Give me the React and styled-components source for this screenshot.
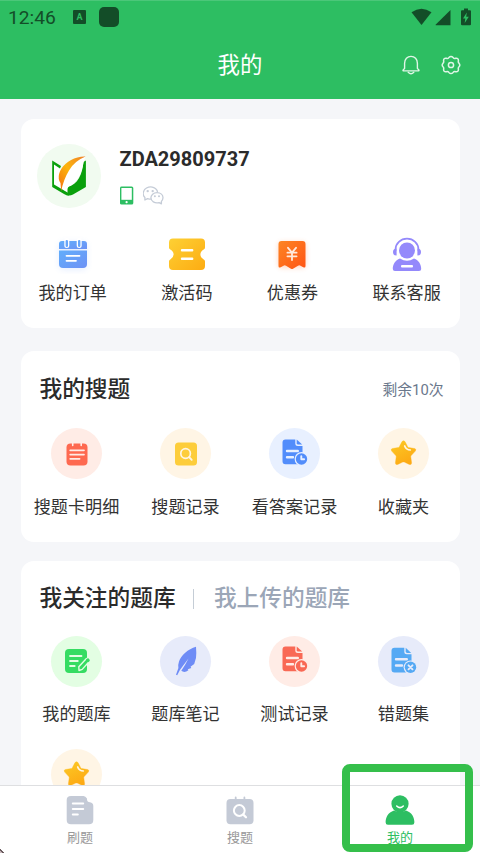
import React from "react";
import styled, { createGlobalStyle } from "styled-components";

const GlobalStyle = createGlobalStyle`
  * {
    box-sizing: border-box;
  }
  body {
    margin: 0;
    background-color: #f5f6f9;
    font-family: Roboto, "Noto Sans CJK SC", sans-serif;
    color: #333;
  }
  svg {
    display: block;
    flex-shrink: 0;
  }
`;

const Screen = styled.div`
  position: relative;
  display: flex;
  flex-direction: column;
  width: 480px;
  height: 853px;
  overflow: hidden;
`;

const Header = styled.header`
  height: 98.5px;
  flex-shrink: 0;
  background-color: #2dbe62;
  border-top: 1px solid #4bc779;
`;

const StatusBar = styled.div`
  display: flex;
  align-items: center;
  height: 31px;
  padding: 0 7px 0 8px;
  color: #134d28;
`;

const Clock = styled.span`
  width: 65px;
  padding-top: 1px;
  font-size: 19.2px;
  line-height: 31px;
`;

const KeyboardBadge = styled.span`
  width: 13px;
  height: 14px;
  margin-right: 13px;
  border-radius: 1px;
  background-color: #134d28;
  color: #2dbe62;
  font-size: 9px;
  font-weight: 700;
  line-height: 14px;
  text-align: center;
`;

const AppBadge = styled.span`
  width: 20px;
  height: 20px;
  border-radius: 5px;
  background-color: #134d28;
`;

const StatusIcons = styled.div`
  margin-left: auto;
`;

const TitleBar = styled.div`
  display: grid;
  grid-template-columns: 1fr auto 1fr;
  align-items: center;
  height: 66px;
  padding: 0 19px;
`;

const PageTitle = styled.h1`
  grid-column: 2;
  margin: 0;
  color: #fff;
  font-size: 22.4px;
  font-weight: 400;
  line-height: 32px;
`;

const Actions = styled.div`
  display: flex;
  justify-content: flex-end;
  gap: 20px;
`;

const Content = styled.main`
  flex: 1;
  display: flex;
  flex-direction: column;
  min-height: 0;
  overflow: hidden;
  padding: 20.5px 20.5px 0 20.5px;
`;

const Card = styled.section`
  flex-shrink: 0;
  height: ${(props) => props.$height}px;
  margin-bottom: ${(props) => props.$gap || 0}px;
  border-radius: 13px;
  background-color: #fff;
`;

const Profile = styled.div`
  display: flex;
  align-items: center;
  height: 113px;
  margin-bottom: 2px;
  padding-left: 16px;
`;

const ProfileInfo = styled.div`
  display: flex;
  flex-direction: column;
  gap: 15px;
  margin-left: 19px;
  padding-top: 1.5px;
`;

const UserName = styled.div`
  font-size: 20px;
  font-weight: 700;
  line-height: 24px;
  color: #2b2b2b;
`;

const Bindings = styled.div`
  display: flex;
  align-items: center;
  gap: 9px;
`;

const Services = styled.div`
  display: flex;
  justify-content: space-between;
  padding: 0 18.7px 0 18px;
`;

const Item = styled.div`
  display: flex;
  flex-direction: column;
  align-items: center;
`;

const Label = styled.span`
  font-size: 17.1px;
  line-height: 24px;
  white-space: nowrap;
`;

const ServiceLabel = styled(Label)`
  margin-top: 7px;
`;

const CardHead = styled.div`
  display: flex;
  align-items: center;
  height: ${(props) => props.$height}px;
  padding: 2px 16px 0 19px;
`;

const CardTitle = styled.h2`
  margin: 0;
  font-size: 22.7px;
  font-weight: 500;
  line-height: 32px;
  color: ${(props) => (props.$muted ? "#9ba6b7" : "#2b2b2b")};
`;

const Remaining = styled.span`
  margin-left: auto;
  font-size: 14.8px;
  line-height: 20px;
  color: #6b788c;
`;

const Divider = styled.span`
  width: 1px;
  height: 20px;
  margin: 0 20px 0 17.3px;
  background-color: #c5cdd6;
`;

const Grid = styled.div`
  display: grid;
  grid-template-columns: repeat(4, 109px);
  row-gap: 23px;
  padding-left: 1.5px;
`;

const Round = styled.div`
  display: flex;
  align-items: center;
  justify-content: center;
  width: 51px;
  height: 51px;
  border-radius: 50%;
  background-color: ${(props) => props.$bg};
`;

const GridLabel = styled(Label)`
  margin-top: 15.5px;
`;

const TabBar = styled.nav`
  display: grid;
  grid-template-columns: repeat(3, 1fr);
  flex-shrink: 0;
  height: 68px;
  border-top: 1.5px solid #dedfe1;
  background-color: #fff;
`;

const Tab = styled.div`
  display: flex;
  flex-direction: column;
  align-items: center;
  padding-top: 8.5px;
  font-size: 13px;
  line-height: 20px;
  color: ${(props) => (props.$active ? "#2dbe62" : "#999")};
  svg {
    margin-bottom: 3.5px;
  }
`;

const Highlight = styled.div`
  position: absolute;
  left: 342px;
  top: 764px;
  width: 131px;
  height: 88px;
  border: 8.5px solid #35bf4b;
  border-radius: 8px;
  pointer-events: none;
`;

const CornerMark = styled.div`
  position: absolute;
  left: 0;
  bottom: 0;
  width: 4px;
  height: 4px;
  background: linear-gradient(45deg, #c9b8bc 35%, #6a5a5e 36%, #6a5a5e 50%, transparent 51%);
`;

const SignalIcons = () => (
  <svg width="62" height="20" viewBox="0 0 62 20" fill="#134d28">
    <path d="M0.5 5.2Q10.5 -1.8 20.5 5.2L10.5 18Z" />
    <path d="M39.5 3V18.2H25Q24 18.2 24.8 17.4Z" />
    <path d="M51 3.2H53V1.5H57V3.2H59Q60 3.2 60 4.2V17.2Q60 18.2 59 18.2H51.2Q50 18.2 50 17.2V4.2Q50 3.2 51 3.2Z" />
    <path d="M55.8 5.5L52 11.5H54.3L53.7 16L57.8 9.8H55.2Z" fill="#2dbe62" />
  </svg>
);

const BellIcon = () => (
  <svg width="20" height="20" viewBox="0 0 20 20" fill="none" stroke="#dff6e7" strokeWidth="1.4" strokeLinejoin="round" strokeLinecap="round">
    <path d="M3.6 13.4V8.2C3.6 4.2 6.3 1.4 10 1.4S16.4 4.2 16.4 8.2V13.4L18 15.2Q18 15.9 17.4 15.9H2.6Q2 15.9 2 15.2Z" />
    <path d="M7.2 17.2Q10 20.2 12.8 17.2" />
  </svg>
);

const GearIcon = () => (
  <svg width="20" height="20" viewBox="0 0 20 20" fill="none" stroke="#dff6e7" strokeWidth="1.5" strokeLinejoin="round">
    <path d="M7.9 2.6Q10 .2 12.1 2.6Q13.1 3.9 14.7 3.3Q17.6 2.9 17.4 5.8Q17 7.3 18 8.2Q19.6 10 18 11.8Q17 12.7 17.4 14.2Q17.6 17.1 14.7 16.7Q13.1 16.1 12.1 17.4Q10 19.8 7.9 17.4Q6.9 16.1 5.3 16.7Q2.4 17.1 2.6 14.2Q3 12.7 2 11.8Q.4 10 2 8.2Q3 7.3 2.6 5.8Q2.4 2.9 5.3 3.3Q6.9 3.9 7.9 2.6Z" />
    <circle cx="10" cy="10" r="2.6" />
  </svg>
);

const Avatar = () => (
  <svg width="64" height="64" viewBox="0 0 64 64">
    <defs>
      <linearGradient id="feather" x1="0" y1="1" x2="1" y2="0">
        <stop offset="0" stopColor="#f36c10" />
        <stop offset="0.5" stopColor="#fcb40c" />
        <stop offset="1" stopColor="#f0802a" />
      </linearGradient>
    </defs>
    <circle cx="32" cy="32" r="32" fill="#f1fbf0" />
    <path d="M17 20.6L23 24.4L44 19L31.8 49.2L17 40.6Z" fill="#fff" />
    <path d="M15.2 16.5L24 22L23 24.4L17 20.6V40.6L31.8 49.2V51.8Q30 52 27 50L15.2 43Z" fill="#0aa00c" />
    <path d="M48.9 16.5V43L36 50.5Q32.5 52 30.5 51V43C41 40.5 45.5 30 46.4 18Z" fill="#0aa00c" />
    <path d="M48.6 12.6C45.5 17 46.5 36 31.8 42.5L28.5 47Q26 46 27.5 37C30.5 26 38 17 48.6 12.6Z" fill="#fff" />
    <path d="M48.6 12.6C38 12.3 29.5 17.5 24.5 24.5Q21.2 29.5 21.8 35Q22.2 37.5 23.5 39L24.2 47.2Q26.5 35.5 32 26.5Q37.5 17 48.6 12.6Z" fill="url(#feather)" />
  </svg>
);

const PhoneIcon = () => (
  <svg width="14" height="19" viewBox="0.3 0 14 19">
    <rect x="0.2" y="0.5" width="13.4" height="18" rx="1.6" fill="#2dbe62" />
    <rect x="1.7" y="2" width="10.4" height="11.8" fill="#fff" />
    <circle cx="6.9" cy="16.2" r="1.1" fill="#fff" />
  </svg>
);

const WechatIcon = () => (
  <svg width="21" height="19" viewBox="0.3 0 21 19" fill="none" stroke="#c5ccd7" strokeWidth="1.3" strokeLinejoin="round">
    <path d="M8.3 12.9Q6.3 13.4 4.8 12.7L2.2 14V11.5C-1 8.4.7 3.8 3.8 2C8.8-.7 14.6 2 14.8 6.3" />
    <path d="M14.3 6.6C18 6.6 20.3 9 20.3 11.8Q20.2 13.8 18.7 15.4V17.8L16.4 16.6C12 17.7 8.2 15.2 8.2 11.8C8.2 9 10.8 6.6 14.3 6.6Z" />
    <g fill="#c5ccd7" stroke="none">
      <circle cx="5" cy="5.1" r="1.2" />
      <circle cx="10" cy="5.1" r="1.2" />
      <circle cx="12.2" cy="10.2" r="1" />
      <circle cx="16.3" cy="10.2" r="1" />
    </g>
  </svg>
);

const OrderIcon = () => (
  <svg width="38" height="40" viewBox="0 0 38 40">
    <defs>
      <linearGradient id="order" x1="0" y1="0" x2="1" y2="1">
        <stop offset="0" stopColor="#62aefb" />
        <stop offset="1" stopColor="#6d91f5" />
      </linearGradient>
      <filter id="orderGlow" x="-40%" y="-40%" width="180%" height="180%">
        <feGaussianBlur stdDeviation="3" />
      </filter>
    </defs>
    <rect x="5" y="8" width="28" height="28" rx="5" fill="#6d9bff" opacity="0.16" filter="url(#orderGlow)" />
    <path d="M5 15V10Q5 7 8 7H30Q33 7 33 10V15Z" fill="url(#order)" />
    <path d="M5 16.5H33V30Q33 34 29 34H9Q5 34 5 30Z" fill="url(#order)" />
    <path d="M12.8 6.5V11.5M25.2 6.5V11.5" stroke="#fff" strokeWidth="5" strokeLinecap="round" />
    <path d="M12.8 7.2V11.8M25.2 7.2V11.8" stroke="#66a5fa" strokeWidth="2.4" strokeLinecap="round" />
    <path d="M12.5 21.8H25.5M12.5 26.8H22" stroke="#fff" strokeWidth="1.8" strokeLinecap="round" />
  </svg>
);

const TicketIcon = () => (
  <svg width="38" height="40" viewBox="0 0 38 40">
    <defs>
      <linearGradient id="ticket" x1="0" y1="0" x2="1" y2="1">
        <stop offset="0" stopColor="#fdd034" />
        <stop offset="1" stopColor="#fdac12" />
      </linearGradient>
    </defs>
    <path d="M5 4.6H33Q37 4.6 37 8.6V13.6Q37 15 35.7 15.6Q32.4 17.6 32.4 20.5T35.7 25.4Q37 26 37 27.4V32Q37 36 33 36H5Q1 36 1 32V27.4Q1 26 2.3 25.4Q5.6 23.4 5.6 20.5T2.3 15.6Q1 15 1 13.6V8.6Q1 4.6 5 4.6Z" fill="url(#ticket)" />
    <path d="M14 16.3H24.2M14 24.7H24.2" stroke="#fff" strokeWidth="2.4" strokeLinecap="round" />
  </svg>
);

const CouponIcon = () => (
  <svg width="38" height="40" viewBox="0 0 38 40">
    <defs>
      <linearGradient id="coupon" x1="0" y1="0" x2="1" y2="1">
        <stop offset="0" stopColor="#fd8524" />
        <stop offset="1" stopColor="#ff5414" />
      </linearGradient>
      <filter id="couponGlow" x="-40%" y="-40%" width="180%" height="180%">
        <feGaussianBlur stdDeviation="2.5" />
      </filter>
    </defs>
    <rect x="5" y="8" width="28" height="26" rx="4" fill="#ff6a20" opacity="0.25" filter="url(#couponGlow)" />
    <path d="M8.5 7H29.5Q32.5 7 32.5 10V32Q32.5 34.3 30.3 33.2L27 31.5Q26 31 25 31.8L20 34.8Q19 35.3 18 34.8L13 31.8Q12 31 11 31.5L7.7 33.2Q5.5 34.3 5.5 32V10Q5.5 7 8.5 7Z" fill="url(#coupon)" />
    <path d="M15 13.8L19 18.5L23 13.8M19 18.5V26M14.4 18.7H23.6M14.4 22.3H23.6" fill="none" stroke="#ffe9dc" strokeWidth="1.8" strokeLinecap="round" />
  </svg>
);

const SupportIcon = () => (
  <svg width="38" height="40" viewBox="0 0 38 40" fill="#9489fb">
    <circle cx="19" cy="16.5" r="8" />
    <path d="M7.5 17V15.5A11.5 10.9 0 0 1 30.5 15.5V17" fill="none" stroke="#9489fb" strokeWidth="1.7" />
    <path d="M8.6 14.5V21.5Q5 21.5 5 18T8.6 14.5ZM29.4 14.5V21.5Q33 21.5 33 18T29.4 14.5Z" />
    <path d="M12 24.5Q19 29 26 24.5C31 26.5 33.2 30.5 33.2 35Q33.2 37 31 37H7Q4.8 37 4.8 35C4.8 30.5 7 26.5 12 24.5Z" />
    <rect x="13" y="31" width="12" height="2.5" rx="1" fill="#fff" />
  </svg>
);

const CardIcon = () => (
  <svg width="26" height="26" viewBox="0 0 26 26">
    <rect x="2.5" y="2.5" width="21" height="22" rx="4" fill="#fe6950" />
    <path d="M8.7 1V4.5M17.2 1V4.5" stroke="#ffece6" strokeWidth="1.6" strokeLinecap="round" />
    <path d="M6.2 9.3H20M6.2 13.6H20M6.2 17.8H15.6" stroke="#ffece6" strokeWidth="1.7" strokeLinecap="round" />
  </svg>
);

const SearchIcon = () => (
  <svg width="26" height="26" viewBox="0 0 26 26">
    <rect x="2" y="1.5" width="22" height="23" rx="3.5" fill="#fdcd3b" />
    <circle cx="12.6" cy="12.5" r="4.8" fill="none" stroke="#fff5e3" strokeWidth="1.7" />
    <path d="M16.2 16.1L18.7 18.8" stroke="#fff5e3" strokeWidth="1.9" strokeLinecap="round" />
  </svg>
);

const DocIcon = ({ color, bg, mark, shift = 0 }) => (
  <svg width="28" height="32" viewBox={`0.5 ${-shift} 28 32`}>
    <path d="M5 2.5H14.8V6.5Q14.8 9 17.3 9H22V24Q22 27.2 19 27.2H5Q2 27.2 2 24.2V5.5Q2 2.5 5 2.5Z" fill={color} />
    <path d="M16.2 2.5L21.7 7.6H17.6Q16.2 7.6 16.2 6.2Z" fill={color} />
    <path d="M6.5 14H17.3M6.5 20.2H12.5" stroke={bg} strokeWidth="2.4" strokeLinecap="round" />
    <circle cx="21" cy="22" r="6.9" fill={bg} />
    <circle cx="21" cy="22" r="5.7" fill={color} />
    <path d={mark} fill="none" stroke={bg} strokeWidth="1.9" strokeLinecap="round" strokeLinejoin="round" />
  </svg>
);

const clockMark = "M20.8 19.2V22.3H23.6";
const crossMark = "M19 20L23 24M23 20L19 24";

const StarIcon = () => (
  <svg width="28" height="28" viewBox="0.5 0.5 28 28">
    <defs>
      <linearGradient id="star" x1="0" y1="0" x2="0.5" y2="1">
        <stop offset="0" stopColor="#fcca25" />
        <stop offset="1" stopColor="#fdaa14" />
      </linearGradient>
    </defs>
    <path d="M12.5 2.1Q14 .2 15.5 2.1L18.3 7.4Q18.6 8 19.3 8.1L25.1 9Q27.2 9.7 25.8 11.6L21.7 16.1Q21.2 16.6 21.3 17.4L22.1 23.4Q21.9 25.7 19.8 24.9L14.8 22.6Q14 22.3 13.2 22.6L8.2 24.9Q6.1 25.7 5.9 23.4L6.7 17.4Q6.8 16.6 6.3 16.1L2.2 11.6Q.8 9.7 2.9 9L8.7 8.1Q9.4 8 9.7 7.4Z" fill="url(#star)" stroke="url(#star)" strokeWidth="0.4" />
    <path d="M15.2 6.5Q16.6 10.3 20.8 10.5" fill="none" stroke="#fff5e3" strokeWidth="1.7" strokeLinecap="round" />
  </svg>
);

const BankIcon = () => (
  <svg width="28" height="28" viewBox="0 0 28 28">
    <rect x="2" y="2" width="22" height="24" rx="4" fill="#35dc62" />
    <path d="M7 9H18.5M7 14H14.8M7 19H11.7" stroke="#e3fde3" strokeWidth="1.8" strokeLinecap="round" />
    <path d="M16 23.5L15.8 19.8L23.2 11.8Q24.8 10.6 26 12.2Q27 13.7 25.8 15L19.2 22.4Z" fill="#35dc62" stroke="#e3fde3" strokeWidth="1.4" strokeLinejoin="round" />
    <path d="M23 12.8L25.4 15.2L26.8 13.8Q27 12.5 25.6 11.4Q24.4 11 23 12.8Z" fill="#35dc62" />
  </svg>
);

const FeatherIcon = () => (
  <svg width="24" height="30" viewBox="0 0 24 30">
    <path d="M22 .8C14 3 7 9.5 5 15.5Q3.8 19 4.4 22L2 28.8L3.2 29.2L5.9 24Q9.3 19.3 14.5 12.5Q11 19.5 7.3 24.8Q10.5 27.3 14.4 24.2L13.8 23.2L17.3 22L16.5 20.8L20.2 18Q22.7 12 22.3 7Z" fill="#6e8cf6" />
  </svg>
);

const PaperTabIcon = () => (
  <svg width="30" height="30" viewBox="0 0 30 30">
    <path d="M6 1H18.5Q20.5 1 22 3.5V4.5Q22 7 25 7.2Q28.3 7.8 28.3 11V25Q28.3 29.3 24 29.3H6Q1.7 29.3 1.7 25V5Q1.7 1 6 1Z" fill="#c4cad6" />
    <path d="M7.8 8.5H18.2M7.8 14H18.2M7.8 19.4H12.8" stroke="#fff" strokeWidth="2" strokeLinecap="round" />
  </svg>
);

const SearchTabIcon = () => (
  <svg width="30" height="30" viewBox="0 0 30 30">
    <rect x="1.5" y="4" width="27" height="25.3" rx="4" fill="#c4cad6" />
    <path d="M10.7 2.5V6M19.4 2.5V6" stroke="#c4cad6" strokeWidth="1.8" strokeLinecap="round" />
    <circle cx="14.3" cy="15.5" r="5.4" fill="none" stroke="#fff" strokeWidth="2" />
    <path d="M18.3 19.6L21 22.3" stroke="#fff" strokeWidth="2.2" strokeLinecap="round" />
  </svg>
);

const MineTabIcon = () => (
  <svg width="30" height="30" viewBox="0 0 30 30" fill="#2dbe62">
    <circle cx="15" cy="8.8" r="8.6" />
    <path d="M9 15.5Q15 18.5 21 15.5C27 17.5 29.4 22.5 29.4 27.3Q29.4 29.8 27 29.8H3Q.6 29.8 .6 27.3C.6 22.5 3 17.5 9 15.5Z" />
    <path d="M11.7 11Q15 14.3 18.3 11" fill="none" stroke="#fff" strokeWidth="1.5" strokeLinecap="round" />
  </svg>
);

const services = [
  { label: "我的订单", icon: <OrderIcon /> },
  { label: "激活码", icon: <TicketIcon /> },
  { label: "优惠券", icon: <CouponIcon /> },
  { label: "联系客服", icon: <SupportIcon /> },
];

const searches = [
  { id: 1, label: "搜题卡明细", bg: "#ffece6", icon: <CardIcon /> },
  { id: 2, label: "搜题记录", bg: "#fff5e5", icon: <SearchIcon /> },
  {
    id: 3,
    label: "看答案记录",
    bg: "#e8f0ff",
    icon: <DocIcon color="#528dfb" bg="#e8f0ff" mark={clockMark} shift={-1} />,
  },
  { id: 4, label: "收藏夹", bg: "#fff5e5", icon: <StarIcon /> },
];

const banks = [
  { id: 1, label: "我的题库", bg: "#e3fee3", icon: <BankIcon /> },
  { id: 2, label: "题库笔记", bg: "#e7ebfa", icon: <FeatherIcon /> },
  {
    id: 3,
    label: "测试记录",
    bg: "#ffece6",
    icon: <DocIcon color="#f96955" bg="#ffece6" mark={clockMark} shift={-1} />,
  },
  {
    id: 4,
    label: "错题集",
    bg: "#e7ebfa",
    icon: <DocIcon color="#55a9f4" bg="#e7ebfa" mark={crossMark} shift={0.3} />,
  },
  { id: 5, bg: "#fff5e5", icon: <StarIcon /> },
];

const IconGrid = ({ items }) => (
  <Grid>
    {items.map((item) => (
      <Item key={item.id}>
        <Round $bg={item.bg}>{item.icon}</Round>
        {item.label && <GridLabel>{item.label}</GridLabel>}
      </Item>
    ))}
  </Grid>
);

const App = () => {
  return (
    <>
      <GlobalStyle />
      <Screen>
        <Header>
          <StatusBar>
            <Clock>12:46</Clock>
            <KeyboardBadge>A</KeyboardBadge>
            <AppBadge />
            <StatusIcons>
              <SignalIcons />
            </StatusIcons>
          </StatusBar>
          <TitleBar>
            <PageTitle>我的</PageTitle>
            <Actions>
              <BellIcon />
              <GearIcon />
            </Actions>
          </TitleBar>
        </Header>
        <Content>
          <Card $height={209} $gap={22.5}>
            <Profile>
              <Avatar />
              <ProfileInfo>
                <UserName>ZDA29809737</UserName>
                <Bindings>
                  <PhoneIcon />
                  <WechatIcon />
                </Bindings>
              </ProfileInfo>
            </Profile>
            <Services>
              {services.map((item) => (
                <Item key={item.label}>
                  {item.icon}
                  <ServiceLabel>{item.label}</ServiceLabel>
                </Item>
              ))}
            </Services>
          </Card>
          <Card $height={191.5} $gap={19}>
            <CardHead $height={77.5}>
              <CardTitle>我的搜题</CardTitle>
              <Remaining>剩余10次</Remaining>
            </CardHead>
            <IconGrid items={searches} />
          </Card>
          <Card $height={292}>
            <CardHead $height={74.5}>
              <CardTitle>我关注的题库</CardTitle>
              <Divider />
              <CardTitle $muted>我上传的题库</CardTitle>
            </CardHead>
            <IconGrid items={banks} />
          </Card>
        </Content>
        <TabBar>
          <Tab>
            <PaperTabIcon />
            刷题
          </Tab>
          <Tab>
            <SearchTabIcon />
            搜题
          </Tab>
          <Tab $active>
            <MineTabIcon />
            我的
          </Tab>
        </TabBar>
        <Highlight />
        <CornerMark />
      </Screen>
    </>
  );
};
export default App;
